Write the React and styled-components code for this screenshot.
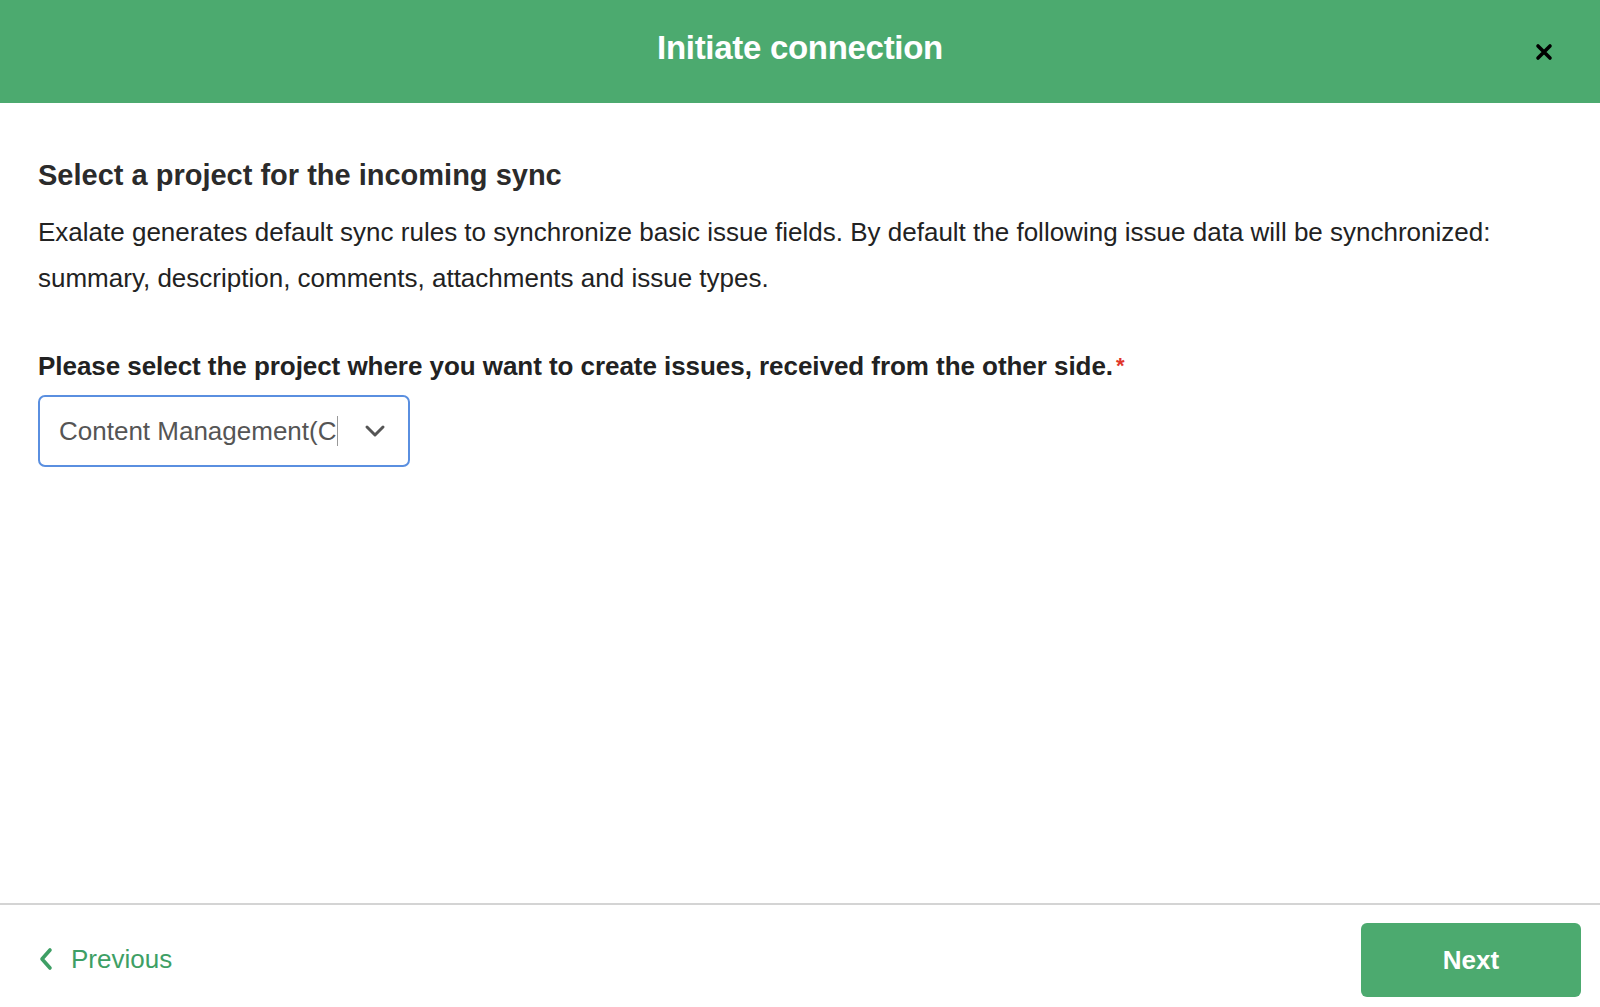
import React from 'react';
import styled, { createGlobalStyle } from 'styled-components';

const GlobalStyle = createGlobalStyle`
  html, body { margin: 0; padding: 0; background: #fff; }
  body { font-family: "Liberation Sans", Arial, sans-serif; }
`;

const Dialog = styled.div`
  width: 1600px;
  height: 1007px;
  display: flex;
  flex-direction: column;
  background: #fff;
`;

const Header = styled.header`
  height: 103px;
  background: #4caa6f;
  display: flex;
  align-items: center;
  justify-content: center;
  position: relative;
  flex-shrink: 0;
`;

const Title = styled.h1`
  margin: 0 0 8px;
  color: #fff;
  font-size: 33px;
  font-weight: 700;
  letter-spacing: -0.3px;
`;

const CloseButton = styled.button`
  position: absolute;
  right: 44px;
  top: 40px;
  width: 24px;
  height: 24px;
  padding: 0;
  border: 0;
  background: none;
  display: flex;
  align-items: center;
  justify-content: center;
`;

const Body = styled.main`
  flex: 1;
  padding: 54px 38px 0;
`;

const Heading = styled.h2`
  margin: 0;
  font-size: 29px;
  font-weight: 700;
  color: #2b2b2b;
  line-height: 36px;
`;

const Text = styled.p`
  margin: 16px 0 0;
  font-size: 26px;
  line-height: 46px;
  color: #222;
`;

const Label = styled.div`
  margin-top: 47px;
  font-size: 26px;
  font-weight: 700;
  color: #222;
  line-height: 36px;
  letter-spacing: -0.05px;
`;

const Required = styled.span`
  color: #e0352b;
  font-size: 22px;
  vertical-align: top;
  margin-left: 3px;
`;

const Select = styled.div`
  margin-top: 11px;
  width: 372px;
  height: 72px;
  box-sizing: border-box;
  border: 2px solid #5a8fe0;
  border-radius: 7px;
  display: flex;
  align-items: center;
  padding: 0 20px 0 19px;
`;

const SelectValue = styled.span`
  font-size: 26px;
  color: #555;
  white-space: nowrap;
`;

const Caret = styled.span`
  width: 1px;
  height: 30px;
  background: #999;
  margin-left: 1px;
`;

const Chevron = styled.span`
  margin-left: auto;
  display: flex;
  margin-right: 2px;
`;

const Footer = styled.footer`
  height: 102px;
  border-top: 2px solid #d4d4d4;
  display: flex;
  align-items: center;
  justify-content: space-between;
  padding: 0 19px 0 38px;
  flex-shrink: 0;
`;

const PrevLink = styled.a`
  display: flex;
  align-items: center;
  gap: 17px;
  color: #3e9f65;
  font-size: 26px;
  text-decoration: none;
  margin-top: 6px;
`;

const NextButton = styled.button`
  width: 220px;
  height: 74px;
  border: 0;
  border-radius: 6px;
  background: #4caa6f;
  color: #fff;
  font-family: "Liberation Sans", Arial, sans-serif;
  font-size: 26px;
  font-weight: 700;
  margin-top: 8px;
`;

export default function App() {
  return (
    <>
      <GlobalStyle />
      <Dialog>
        <Header>
          <Title>Initiate connection</Title>
          <CloseButton aria-label="Close">
            <svg width="18" height="18" viewBox="0 0 18 18">
              <path d="M3 3 L15 15 M15 3 L3 15" stroke="#000" strokeWidth="3.6" strokeLinecap="round" />
            </svg>
          </CloseButton>
        </Header>
        <Body>
          <Heading>Select a project for the incoming sync</Heading>
          <Text>
            Exalate generates default sync rules to synchronize basic issue fields. By default the following issue data will be synchronized:
            summary, description, comments, attachments and issue types.
          </Text>
          <Label>
            Please select the project where you want to create issues, received from the other side.
            <Required>*</Required>
          </Label>
          <Select>
            <SelectValue>Content Management(C</SelectValue>
            <Caret />
            <Chevron>
              <svg width="22" height="14" viewBox="0 0 22 14">
                <path d="M3 3 L11 11 L19 3" fill="none" stroke="#555" strokeWidth="3" strokeLinecap="round" strokeLinejoin="round" />
              </svg>
            </Chevron>
          </Select>
        </Body>
        <Footer>
          <PrevLink href="#">
            <svg width="16" height="24" viewBox="0 0 16 24">
              <path d="M12 3 L4 12 L12 21" fill="none" stroke="#3e9f65" strokeWidth="3.6" strokeLinecap="round" strokeLinejoin="round" />
            </svg>
            Previous
          </PrevLink>
          <NextButton>Next</NextButton>
        </Footer>
      </Dialog>
    </>
  );
}
